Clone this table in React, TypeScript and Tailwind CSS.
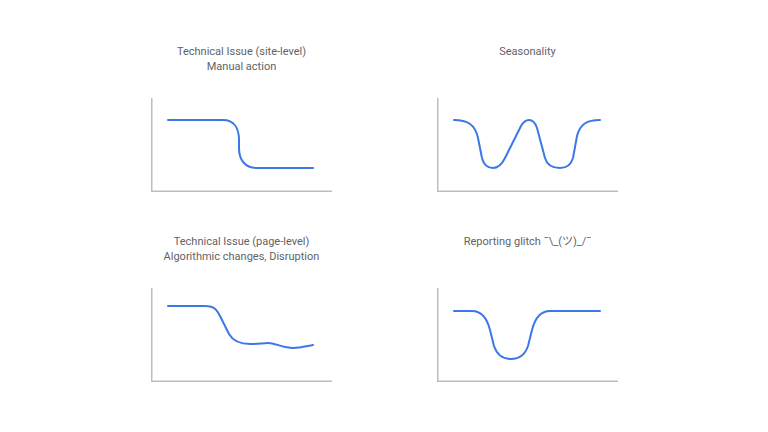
import React from "react";

type Chart = { title: string[]; d: string };

const charts: Chart[] = [
  {
    title: ["Technical Issue (site-level)", "Manual action"],
    d: "M17 22 H72 C83 22 88 30 88 42 V50 C88 62 94 70 106 70 H162",
  },
  {
    title: ["Seasonality"],
    d: "M17 22 C30 22 38 26 41 40 L45 60 C47 68 52 70 56 70 C62 70 65 66 68 60 L84 28 C87 23 89 22 92 22 C95 22 98 24 100 30 L108 60 C110 67 115 70 123 70 C130 70 134 67 136 60 L140 38 C143 26 150 22 163 22",
  },
  {
    title: ["Technical Issue (page-level)", "Algorithmic changes, Disruption"],
    d: "M17 18 H54 C64 18 66 22 70 30 L78 46 C82 53 88 56 99 56 C108 56 112 55 117 55 C124 55 132 60 142 60 C150 60 156 58 162 57",
  },
  {
    title: ["Reporting glitch ¯\\_(ツ)_/¯"],
    d: "M17 23 H35 C45 23 50 30 53 42 L57 58 C60 67 66 71 74 71 C82 71 88 67 91 58 L95 42 C98 30 103 23 113 23 H163",
  },
];

function Cell({ c }: { c: Chart }) {
  return (
    <div className="flex flex-col items-center w-[181px]">
      <div className="h-[30px] w-[260px] flex flex-col items-center text-[11px] leading-[15px] text-[#5f6368] whitespace-nowrap">
        {c.title.map((t, i) => (
          <div key={i}>{t}</div>
        ))}
      </div>
      <svg className="mt-[24px]" width="181" height="94" viewBox="0 0 181 94">
        <path d="M0.75 0 V93.25 H181" fill="none" stroke="#bdbdbd" strokeWidth="1.5" />
        <path d={c.d} fill="none" stroke="#3b78e7" strokeWidth="2" strokeLinecap="round" strokeLinejoin="round" />
      </svg>
    </div>
  );
}

export default function App() {
  return (
    <div
      className="w-[768px] h-[432px] bg-white pt-[44px] pl-[151px] overflow-hidden"
      style={{ fontFamily: "Roboto, 'Noto Sans CJK JP', sans-serif" }}
    >
      <div className="grid grid-cols-[181px_181px] gap-x-[105px] gap-y-[42px]">
        {charts.map((c, i) => (
          <Cell key={i} c={c} />
        ))}
      </div>
    </div>
  );
}
